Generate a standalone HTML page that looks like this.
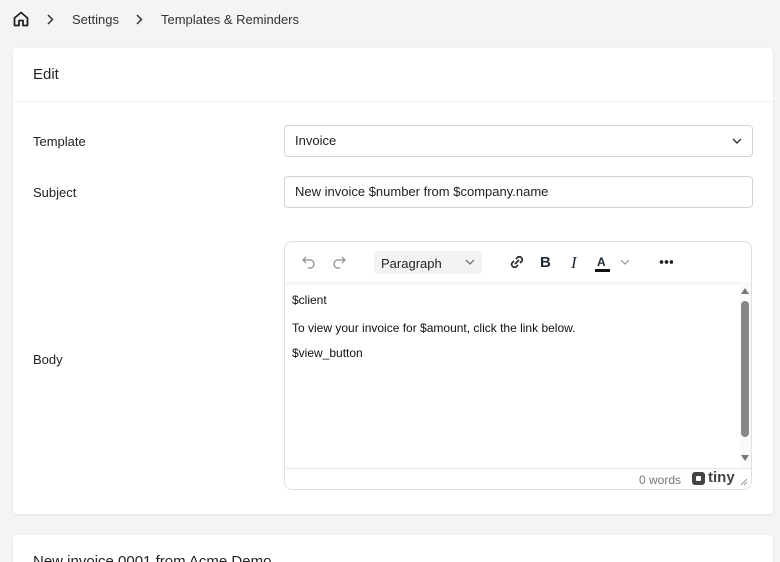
<!DOCTYPE html>
<html><head><style>
*{box-sizing:border-box;margin:0;padding:0}
html,body{width:780px;height:562px;overflow:hidden}
body{background:#f4f4f5;font-family:"Liberation Sans",sans-serif;color:#1f2937;position:relative}
.abs{position:absolute}
.card{position:absolute;left:13px;width:760px;background:#fff;border-radius:4px;box-shadow:0 1px 3px rgba(0,0,0,.08)}
.lbl{position:absolute;left:33px;font-size:13px;color:#222}
.inp{position:absolute;left:284px;width:469px;height:32px;border:1px solid #d4d4d8;border-radius:4px;font-size:13px;padding:0 10px;line-height:30px;color:#222}
</style></head><body>
<svg class="abs" style="left:12px;top:10px" width="18" height="18" viewBox="0 0 18 18" fill="none" stroke="#222" stroke-width="1.8" stroke-linejoin="round"><path d="M2.5 8 9 2.5 15.5 8V15.5H11V10.5H7V15.5H2.5Z"/></svg>
<svg class="abs" style="left:46px;top:14px" width="8" height="11" viewBox="0 0 8 11" fill="none" stroke="#333" stroke-width="1.5"><path d="M2 1l4.5 4.5L2 10"/></svg>
<div class="abs" style="left:72px;top:12px;font-size:13px;color:#333">Settings</div>
<svg class="abs" style="left:135px;top:14px" width="8" height="11" viewBox="0 0 8 11" fill="none" stroke="#333" stroke-width="1.5"><path d="M2 1l4.5 4.5L2 10"/></svg>
<div class="abs" style="left:161px;top:12px;font-size:13px;color:#333">Templates &amp; Reminders</div>

<div class="card" style="top:48px;height:466px">
 <div class="abs" style="left:20px;top:18px;font-size:15px;color:#222">Edit</div>
 <div class="abs" style="left:0;top:53px;width:760px;border-top:1px solid #f0f0f0"></div>
</div>
<div class="lbl" style="top:134px">Template</div>
<div class="inp" style="top:125px">Invoice<svg class="abs" style="right:10px;top:11px" width="10" height="8" viewBox="0 0 10 8" fill="none" stroke="#333" stroke-width="1.4"><path d="M1 2l4 4 4-4"/></svg></div>
<div class="lbl" style="top:185px">Subject</div>
<div class="inp" style="top:176px">New invoice $number from $company.name</div>
<div class="lbl" style="top:352px">Body</div>

<div class="abs" style="left:284px;top:241px;width:468px;height:249px;border:1px solid #e0e0e0;border-radius:8px;overflow:hidden">
 <div class="abs" style="left:0;top:0;width:468px;height:40px;box-shadow:0 2px 3px rgba(0,0,0,.06)">
  <svg class="abs" style="left:16px;top:12px" width="16" height="16" viewBox="0 0 16 16" fill="none" stroke="#999" stroke-width="1.4"><path d="M5 3 2 6l3 3M2 6h7a4 4 0 0 1 0 8H7"/></svg>
  <svg class="abs" style="left:46px;top:12px" width="16" height="16" viewBox="0 0 16 16" fill="none" stroke="#999" stroke-width="1.4"><path d="M11 3l3 3-3 3M14 6H7a4 4 0 0 0 0 8h2"/></svg>
  <div class="abs" style="left:89px;top:9px;width:108px;height:23px;background:#f3f3f3;border-radius:3px;font-size:13px;padding:5px 7px;color:#222">Paragraph<svg class="abs" style="right:7px;top:8px" width="10" height="7" viewBox="0 0 10 7" fill="none" stroke="#666" stroke-width="1.2"><path d="M1 1l4 4 4-4"/></svg></div>
  <svg class="abs" style="left:223px;top:11px" width="18" height="18" viewBox="0 0 18 18" fill="none" stroke="#222" stroke-width="1.6"><path d="M8 6l2-2a3 3 0 0 1 4 4l-2 2M10 12l-2 2a3 3 0 0 1-4-4l2-2M7 11l4-4"/></svg>
  <div class="abs" style="left:255px;top:12px;font-size:15px;font-weight:bold">B</div>
  <div class="abs" style="left:286px;top:11px;font-size:17px;font-style:italic;font-family:'Liberation Serif',serif">I</div>
  <div class="abs" style="left:312px;top:13px;font-size:12px;font-weight:bold">A</div>
  <div class="abs" style="left:310px;top:27px;width:15px;height:3px;background:#111"></div>
  <svg class="abs" style="left:335px;top:17px" width="10" height="6" viewBox="0 0 10 6" fill="none" stroke="#999" stroke-width="1.2"><path d="M1 1l4 4 4-4"/></svg>
  <div class="abs" style="left:374px;top:18px;width:14px;height:4px;background:radial-gradient(circle,#222 1.7px,transparent 2px) 0 0/5px 4px repeat-x"></div>
 </div>
 <div class="abs" style="left:7px;top:51px;font-size:12px;color:#111">$client</div>
 <div class="abs" style="left:7px;top:79px;font-size:12px;color:#111">To view your invoice for $amount, click the link below.</div>
 <div class="abs" style="left:7px;top:104px;font-size:12px;color:#111">$view_button</div>
 <div class="abs" style="left:455px;top:40px;width:12px;height:186px;background:#fafafa"></div>
 <div class="abs" style="left:456px;top:46px;width:0;height:0;border:4px solid transparent;border-bottom:6px solid #777;border-top:0"></div>
 <div class="abs" style="left:456px;top:59px;width:8px;height:136px;background:#888;border-radius:4px"></div>
 <div class="abs" style="left:456px;top:213px;width:0;height:0;border:4px solid transparent;border-top:6px solid #777;border-bottom:0"></div>
 <div class="abs" style="left:0;top:226px;width:468px;border-top:1px solid #e5e5e5"></div>
 <div class="abs" style="left:354px;top:231px;font-size:12px;color:#777">0 words</div>
 <div class="abs" style="left:407px;top:230px;width:13px;height:13px;background:#444;border-radius:3px"><div class="abs" style="left:4px;top:4px;width:5px;height:5px;background:#fff;border-radius:1px"></div></div>
 <div class="abs" style="left:423px;top:227px;font-size:15px;font-weight:bold;color:#444">tiny</div>
 <svg class="abs" style="left:455px;top:236px" width="8" height="8" viewBox="0 0 8 8" stroke="#999" stroke-width="1"><path d="M1 7 7 1M4 7 7 4"/></svg>
</div>

<div class="card" style="top:535px;height:40px">
 <div class="abs" style="left:20px;top:18px;font-size:15px;color:#222">New invoice 0001 from Acme Demo</div>
</div>
</body></html>
